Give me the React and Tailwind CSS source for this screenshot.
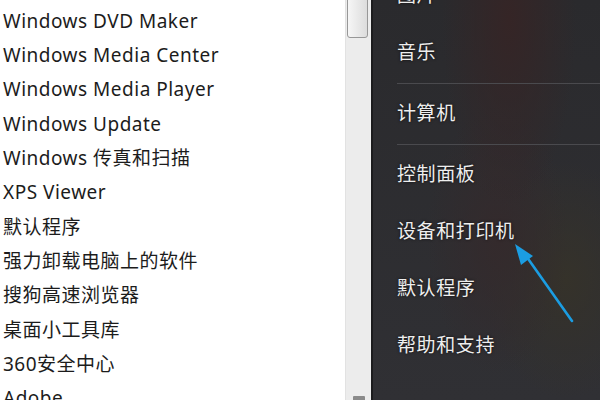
import React from "react";

const leftItems = [
  "Windows DVD Maker",
  "Windows Media Center",
  "Windows Media Player",
  "Windows Update",
  "Windows 传真和扫描",
  "XPS Viewer",
  "默认程序",
  "强力卸载电脑上的软件",
  "搜狗高速浏览器",
  "桌面小工具库",
  "360安全中心",
  "Adobe",
];

// null marks a separator
const rightItems = [
  "图片",
  "音乐",
  null,
  "计算机",
  null,
  "控制面板",
  "设备和打印机",
  "默认程序",
  "帮助和支持",
];

const font = { fontFamily: '"Noto Sans", "Noto Sans CJK SC", sans-serif' };

const Arrow = () => (
  <svg
    className="absolute left-0 top-0 pointer-events-none"
    width="600"
    height="400"
    viewBox="0 0 600 400"
  >
    <line
      x1="572"
      y1="321"
      x2="524"
      y2="253"
      stroke="#1b9de2"
      strokeWidth="2.6"
      strokeLinecap="round"
    />
    <polygon points="515,244 533,256 521,265" fill="#1b9de2" />
  </svg>
);

export default function App() {
  return (
    <div
      className="relative flex w-[600px] h-[400px] overflow-hidden bg-white"
      style={font}
    >
      {/* program list */}
      <div className="w-[345px] pt-[4px] flex flex-col">
        {leftItems.map((t) => (
          <div
            key={t}
            className="h-[34.3px] shrink-0 flex items-center pl-[3px] text-[19px] tracking-[0.5px] text-[#1c1c1c] whitespace-nowrap"
          >
            {t}
          </div>
        ))}
      </div>

      {/* scrollbar */}
      <div className="relative w-[26px] bg-[#ececec] border-l border-[#e2e2e2]">
        <div className="absolute left-[1px] right-[3px] top-[-4px] h-[42px] rounded-[3px] border border-[#979797] bg-[linear-gradient(to_right,#f6f6f6,#dcdcdc)]" />
        <div className="absolute left-[7px] top-[396px] w-[12px] h-[6px] bg-[#8a8a8a] rounded-[1px]" />
      </div>

      {/* start menu right pane */}
      <div className="flex-1 border-l-2 border-[#1c1c1e] bg-[radial-gradient(ellipse_at_60%_5%,#352526_0%,transparent_35%),radial-gradient(ellipse_at_55%_60%,#342a2c_0%,transparent_40%),radial-gradient(ellipse_at_85%_70%,#35322a_0%,transparent_30%),linear-gradient(to_bottom,#2a2a2d,#303034)]">
        <div className="mt-[-33px] pl-[24px] flex flex-col">
          {rightItems.map((t, i) =>
            t === null ? (
              <div key={i} className="h-[4px] flex items-center">
                <div className="h-px w-full bg-[#4a4a4e]" />
              </div>
            ) : (
              <div
                key={i}
                className="h-[57px] flex items-center text-[19px] tracking-[0.6px] text-[#eeeeee] [text-shadow:0_0_3px_rgba(0,0,0,0.8)]"
              >
                {t}
              </div>
            )
          )}
        </div>
      </div>

      <Arrow />
    </div>
  );
}
